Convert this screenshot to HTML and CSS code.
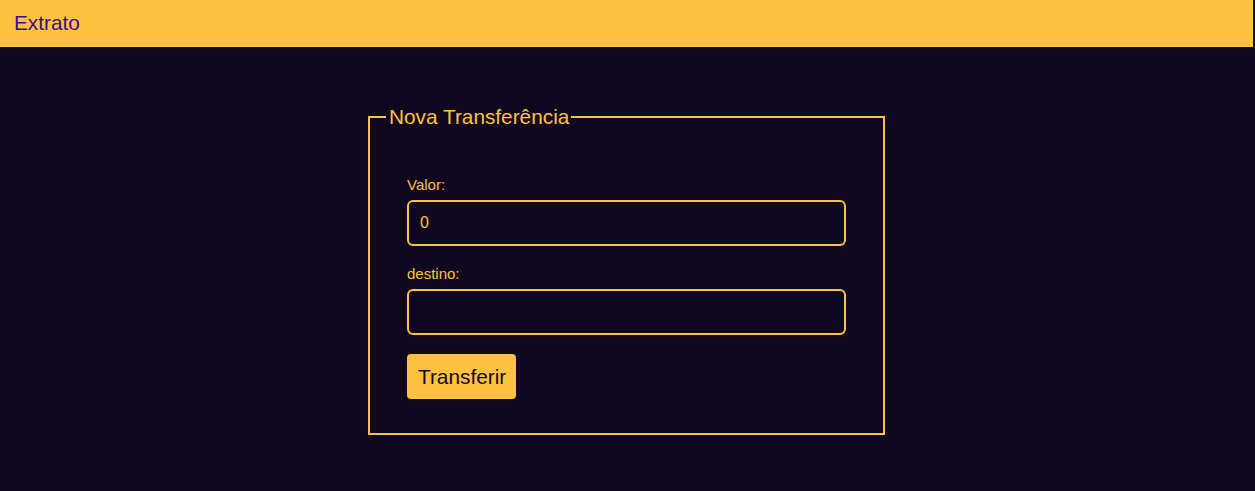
FILE: index.html
```html
<!DOCTYPE html>
<html lang="pt-BR">
<head>
<meta charset="utf-8">
<title>Extrato</title>
<link rel="stylesheet" href="styles.css">
</head>
<body>
<header class="topbar">
  <span class="topbar-title">Extrato</span>
</header>
<main class="main">
  <form class="transfer">
    <fieldset class="transfer-box">
      <legend class="transfer-legend">Nova Transferência</legend>
      <div class="transfer-body">
        <div class="field">
          <label class="field-label" for="valor">Valor:</label>
          <input class="field-input" id="valor" type="text" value="0">
        </div>
        <div class="field">
          <label class="field-label" for="destino">destino:</label>
          <input class="field-input" id="destino" type="text" value="">
        </div>
        <div class="actions">
          <button class="btn" type="button">Transferir</button>
        </div>
      </div>
    </fieldset>
  </form>
</main>
</body>
</html>
```
FILE: styles.css
```css
* { box-sizing: border-box; }
html, body {
  margin: 0;
  padding: 0;
  background: #0f0820;
  font-family: "Liberation Sans", Arial, sans-serif;
  height: 100%;
}
.topbar {
  height: 47px;
  margin-right: 2px;
  background: #ffc13f;
  display: flex;
  align-items: center;
  padding: 0 14px 2px;
}
.topbar-title {
  color: #3b0e8c;
  font-size: 20.8px;
}
.main {
  display: flex;
  justify-content: center;
  padding-top: 58px;
  padding-right: 2px;
}
.transfer { margin: 0; }
.transfer-box {
  width: 517px;
  margin: 0;
  padding: 0;
  border: 2px solid #ffc13f;
  min-inline-size: 0;
}
.transfer-legend {
  margin-left: 16px;
  padding: 0 2px 0 3px;
  color: #ffc13f;
  font-size: 20.8px;
}
.transfer-body {
  display: flex;
  flex-direction: column;
  gap: 19px;
  padding: 47px 37px 34px;
}
.field {
  display: flex;
  flex-direction: column;
  gap: 7px;
}
.field-label {
  color: #ffc13f;
  font-size: 15px;
}
.field-input {
  width: 100%;
  height: 46px;
  border: 2px solid #ffc13f;
  border-radius: 6px;
  background: transparent;
  color: #ffc13f;
  font-family: "Liberation Sans", Arial, sans-serif;
  font-size: 16px;
  padding: 0 11px;
  outline: none;
}
.actions { display: flex; }
.btn {
  height: 45px;
  padding: 0 10px 0 11px;
  border: none;
  border-radius: 4px;
  background: #ffc13f;
  color: #110a1e;
  font-family: "Liberation Sans", Arial, sans-serif;
  font-size: 20.8px;
  cursor: pointer;
}
```
